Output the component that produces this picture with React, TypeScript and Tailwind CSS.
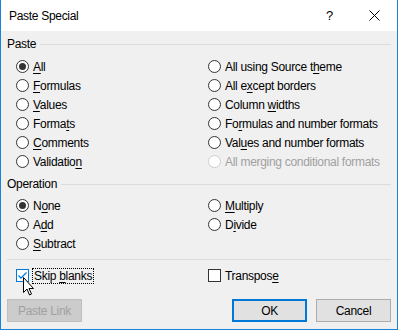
import React from 'react';

const font = { fontFamily: '"Liberation Sans", Arial, sans-serif' };

function Acc({ text, u }: { text: string; u?: number }) {
  if (u === undefined) return <>{text}</>;
  return (
    <>
      {text.slice(0, u)}
      <span className="underline decoration-1 underline-offset-[2px]">{text[u]}</span>
      {text.slice(u + 1)}
    </>
  );
}

function Radio({ text, u, checked, disabled }: { text: string; u?: number; checked?: boolean; disabled?: boolean }) {
  return (
    <div className="flex h-[19px] items-center">
      <span
        className={`flex h-[13px] w-[13px] items-center justify-center rounded-full border bg-white ${
          disabled ? 'border-[#cccccc]' : 'border-[#333333]'
        }`}
      >
        {checked && <span className="h-[7px] w-[7px] rounded-full bg-[#333333]" />}
      </span>
      <span className={`ml-[4px] ${disabled ? 'text-[#a0a0a0]' : 'text-black'}`}>
        <Acc text={text} u={u} />
      </span>
    </div>
  );
}

function GroupHeader({ title }: { title: string }) {
  return (
    <div className="flex h-[16px] items-center pr-[6px]">
      <span className="leading-[16px]">{title}</span>
      <span className="ml-[4px] h-px flex-1 bg-[#dcdcdc]" />
    </div>
  );
}

export default function App() {
  return (
    <div
      className="relative flex h-[330px] w-[398px] flex-col border-x border-b border-[#1883d7] bg-white text-[12px] tracking-[-0.3px] text-black"
      style={font}
    >
      {/* Title bar */}
      <div className="flex h-[31px] items-center bg-white">
        <span className="pl-[8px]">Paste Special</span>
        <div className="ml-auto flex h-full">
          <div className="flex w-[45px] items-center justify-center text-[13px]">?</div>
          <div className="flex w-[45px] items-center justify-center">
            <svg width="11" height="11" viewBox="0 0 11 11">
              <path d="M0.5 0.5 L10.5 10.5 M10.5 0.5 L0.5 10.5" stroke="#000" strokeWidth="1" fill="none" />
            </svg>
          </div>
        </div>
      </div>

      {/* Body */}
      <div className="flex flex-1 flex-col bg-[#f0f0f0] pl-[6px]">
        <div className="mt-[5px]">
          <GroupHeader title="Paste" />
        </div>
        <div className="mt-[5px] grid grid-cols-[192px_1fr] pl-[9px]">
          <div className="flex flex-col">
            <Radio text="All" u={0} checked />
            <Radio text="Formulas" u={0} />
            <Radio text="Values" u={0} />
            <Radio text="Formats" u={5} />
            <Radio text="Comments" u={0} />
            <Radio text="Validation" u={9} />
          </div>
          <div className="flex flex-col">
            <Radio text="All using Source theme" u={18} />
            <Radio text="All except borders" u={5} />
            <Radio text="Column widths" u={7} />
            <Radio text="Formulas and number formats" u={2} />
            <Radio text="Values and number formats" u={3} />
            <Radio text="All merging conditional formats" disabled />
          </div>
        </div>

        <div className="mt-[5px]">
          <GroupHeader title="Operation" />
        </div>
        <div className="mt-[4px] grid grid-cols-[192px_1fr] pl-[9px]">
          <div className="flex flex-col">
            <Radio text="None" u={1} checked />
            <Radio text="Add" u={1} />
            <Radio text="Subtract" u={0} />
          </div>
          <div className="flex flex-col">
            <Radio text="Multiply" u={0} />
            <Radio text="Divide" u={1} />
          </div>
        </div>

        <div className="mr-[6px] mt-[6px] h-px bg-[#dcdcdc]" />

        <div className="mt-[6px] grid grid-cols-[192px_1fr] pl-[9px]">
          <div className="flex h-[19px] items-center">
            <span className="flex h-[13px] w-[13px] items-center justify-center border border-[#0078d7] bg-white">
              <svg width="11" height="11" viewBox="0 0 11 11">
                <path d="M1.5 5.5 L4 8 L9.5 2.5" stroke="#0078d7" strokeWidth="1.3" fill="none" />
              </svg>
            </span>
            <span className="ml-[3px] border border-dotted border-black px-[1px] leading-[14px]">
              <Acc text="Skip blanks" u={5} />
            </span>
          </div>
          <div className="flex h-[19px] items-center">
            <span className="h-[13px] w-[13px] border border-[#333333] bg-white" />
            <span className="ml-[4px]">
              <Acc text="Transpose" u={8} />
            </span>
          </div>
        </div>

        <div className="mt-[14px] flex h-[23px] pr-[6px]">
          <div className="flex w-[75px] items-center justify-center border border-[#bfbfbf] bg-[#cccccc] text-[#a0a0a0]">
            Paste Link
          </div>
          <div className="ml-auto flex w-[75px] items-center justify-center border-2 border-[#0078d7] bg-[#e1e1e1]">
            OK
          </div>
          <div className="ml-[9px] flex w-[75px] items-center justify-center border border-[#adadad] bg-[#e1e1e1]">
            Cancel
          </div>
        </div>
      </div>

      {/* Mouse pointer */}
      <svg className="absolute left-[22px] top-[277px]" width="12" height="19" viewBox="0 0 12 19">
        <path d="M0.5 0.5 L0.5 15.5 L4 12 L6.5 18 L8.5 17 L6 11.5 L10.5 11.5 Z" fill="#fff" stroke="#000" strokeWidth="1" />
      </svg>
    </div>
  );
}
